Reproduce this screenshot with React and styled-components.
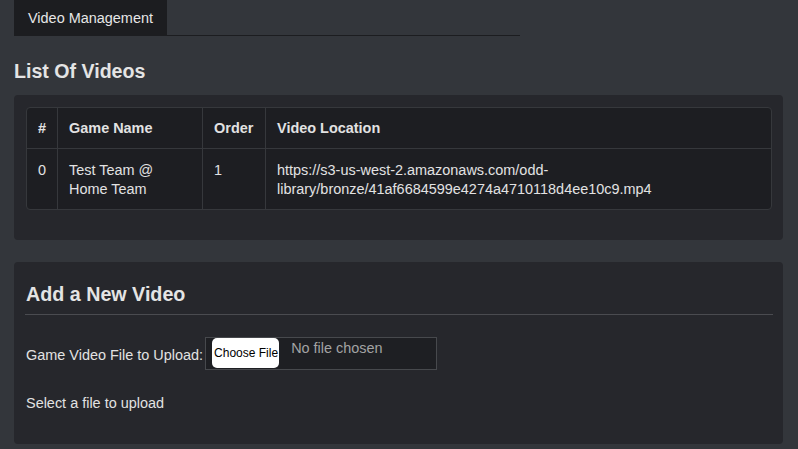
import { createGlobalStyle, styled } from "styled-components";

const GlobalStyle = createGlobalStyle`
  html, body {
    margin: 0;
    padding: 0;
    background-color: #33363b;
    color: #e2e2e2;
    font-family: "Liberation Sans", Arial, Helvetica, sans-serif;
    font-size: 14.45px;
  }
`;

const Page = styled.div`
  padding: 0 15px 0 14px;
`;

const TabBar = styled.div`
  display: flex;
  width: 506px;
  border-bottom: 1px solid #1c1d20;
`;

const Tab = styled.div`
  height: 35px;
  padding: 0 14px;
  display: flex;
  align-items: center;
  background-color: ${(props) => (props.active ? "#1c1d20" : "transparent")};
  color: #e6e6e6;
`;

const Title = styled.h2`
  margin: 24px 0 13px;
  font-size: 19.6px;
  font-weight: 700;
  color: #e4e4e4;
  line-height: 22px;
`;

const Panel = styled.div`
  background-color: #26272c;
  border-radius: 4px;
  padding: ${(props) => props.pad};
  margin-bottom: 22.5px;
`;

const Table = styled.table`
  width: 100%;
  border-collapse: separate;
  border-spacing: 0;
  background-color: #1d1e22;
  border: 1px solid #36383c;
  border-radius: 4px;
  overflow: hidden;
  font-size: 14.45px;
`;

const Th = styled.th`
  text-align: left;
  font-weight: 700;
  color: #e2e2e2;
  height: 40px;
  padding: 0 11px;
  border-bottom: 1px solid #36383c;
  border-left: ${(props) => (props.first ? "none" : "1px solid #36383c")};
  white-space: nowrap;
`;

const Td = styled.td`
  vertical-align: top;
  padding: 12px 11px 10px;
  line-height: 19px;
  color: #e2e2e2;
  border-left: ${(props) => (props.first ? "none" : "1px solid #36383c")};
`;

const SubTitle = styled.h2`
  margin: 0;
  padding: 0 0 9px 1px;
  font-size: 19.7px;
  font-weight: 700;
  line-height: 22px;
  color: #e4e4e4;
  border-bottom: 1px solid #4a4b50;
`;

const FieldRow = styled.div`
  display: flex;
  align-items: center;
  gap: 2px;
  margin-top: 22px;
  padding-left: 1px;
`;

const Label = styled.label`
  color: #e2e2e2;
  padding-top: 2px;
`;

const FileBox = styled.label`
  box-sizing: border-box;
  display: flex;
  align-items: flex-start;
  width: 232px;
  height: 33px;
  border: 1px solid #47494d;
  background-color: #1e1f23;
  padding-left: 6px;
  cursor: pointer;
`;

const HiddenInput = styled.input`
  display: none;
`;

const ChooseButton = styled.span`
  display: flex;
  align-items: center;
  height: 30px;
  padding: 0 1px 0 2px;
  background-color: #ffffff;
  color: #000000;
  border-radius: 5px;
  font-size: 12px;
  white-space: nowrap;
`;

const NoFile = styled.span`
  margin-left: 12px;
  margin-top: 2px;
  color: #a3a3a3;
`;

const Hint = styled.p`
  margin: 25px 0 0 1px;
  color: #e2e2e2;
`;

const videos = [
  {
    id: 0,
    game: ["Test Team @", "Home Team"],
    order: 1,
    location: [
      "https://s3-us-west-2.amazonaws.com/odd-",
      "library/bronze/41af6684599e4274a4710118d4ee10c9.mp4",
    ],
  },
];

export default function App() {
  return (
    <Page>
      <GlobalStyle />
      <TabBar>
        <Tab active>Video Management</Tab>
      </TabBar>
      <Title>List Of Videos</Title>
      <Panel pad="12px 11px 29.5px 12px">
        <Table>
          <thead>
            <tr>
              <Th first style={{ width: 6 }}>#</Th>
              <Th style={{ width: 122 }}>Game Name</Th>
              <Th style={{ width: 40 }}>Order</Th>
              <Th>Video Location</Th>
            </tr>
          </thead>
          <tbody>
            {videos.map((v) => (
              <tr key={v.id}>
                <Td first>{v.id}</Td>
                <Td>
                  {v.game[0]}
                  <br />
                  {v.game[1]}
                </Td>
                <Td>{v.order}</Td>
                <Td>
                  {v.location[0]}
                  <br />
                  {v.location[1]}
                </Td>
              </tr>
            ))}
          </tbody>
        </Table>
      </Panel>
      <Panel pad="21px 10px 33px 11px">
        <SubTitle>Add a New Video</SubTitle>
        <FieldRow>
          <Label htmlFor="video-file">Game Video File to Upload:</Label>
          <FileBox>
            <HiddenInput id="video-file" type="file" accept="video/*" />
            <ChooseButton>Choose File</ChooseButton>
            <NoFile>No file chosen</NoFile>
          </FileBox>
        </FieldRow>
        <Hint>Select a file to upload</Hint>
      </Panel>
    </Page>
  );
}
